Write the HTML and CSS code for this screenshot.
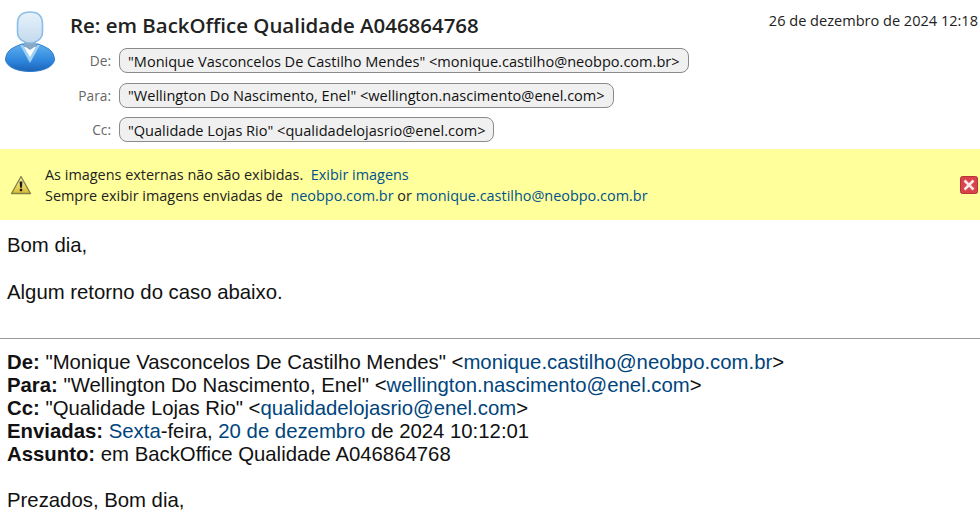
FILE: index.html
```html
<!DOCTYPE html>
<html lang="pt">
<head>
<meta charset="utf-8">
<title>Re: em BackOffice Qualidade A046864768</title>
<link rel="stylesheet" href="styles.css">
</head>
<body>
<header class="head">
  <svg class="avatar" width="50" height="61" viewBox="0 0 50 61" aria-hidden="true">
    <defs>
      <linearGradient id="face" x1="0" y1="0" x2="0" y2="1"><stop offset="0" stop-color="#e6f2fc"/><stop offset="1" stop-color="#c3d9ec"/></linearGradient>
      <linearGradient id="suit" x1="0" y1="0" x2="0" y2="1"><stop offset="0" stop-color="#5fb0ee"/><stop offset="0.6" stop-color="#2f86dc"/><stop offset="1" stop-color="#1a63b8"/></linearGradient>
    </defs>
    <path d="M0.5 49C1 41 5 38 12 35L17 33L33 33L38 35C45 38 49 41 49.5 49C48 56 38 60.5 25 60.5C12 60.5 2 56 0.5 49Z" fill="url(#suit)" stroke="#2e7cc9"/>
    <path d="M18 36H32L25 48Z" fill="#fff"/>
    <path d="M15 34L25 52L35 34L32 34L25 46L18 34Z" fill="#9fd0f4"/>
    <path d="M19 28H31V35L25 39L19 35Z" fill="#8aa8c4"/>
    <path d="M12.5 13C12.5 4 18 1 25 1C32 1 37.5 4 37.5 13L37.5 21C37.5 28 31 32 25 32C19 32 12.5 28 12.5 21Z" fill="url(#face)" stroke="#8cbde6" stroke-width="1.6"/>
  </svg>
  <div class="meta">
    <div class="top">
      <h1 class="subject">Re: em BackOffice Qualidade A046864768</h1>
      <time class="date">26 de dezembro de 2024 12:18</time>
    </div>
    <div class="row"><span class="label">De:</span><span class="pill">"Monique Vasconcelos De Castilho Mendes" &lt;monique.castilho@neobpo.com.br&gt;</span></div>
    <div class="row"><span class="label">Para:</span><span class="pill">"Wellington Do Nascimento, Enel" &lt;wellington.nascimento@enel.com&gt;</span></div>
    <div class="row"><span class="label">Cc:</span><span class="pill">"Qualidade Lojas Rio" &lt;qualidadelojasrio@enel.com&gt;</span></div>
  </div>
</header>
<section class="banner">
  <svg class="warn" width="22" height="20" viewBox="0 0 22 20" aria-hidden="true">
    <defs><linearGradient id="tri" x1="0" y1="0" x2="0" y2="1"><stop offset="0" stop-color="#fdf6a8"/><stop offset="1" stop-color="#d9bc2e"/></linearGradient></defs>
    <path d="M11 1.5L20.5 18.5L1.5 18.5Z" fill="url(#tri)" stroke="#84804a" stroke-width="1.3" stroke-linejoin="round"/>
    <path d="M9.6 6.5H12.4L11.9 12.8H10.1Z" fill="#1c1c1c"/>
    <rect x="9.8" y="13.8" width="2.4" height="2.4" fill="#1c1c1c"/>
  </svg>
  <div class="notice">
    <p class="line">As imagens externas não são exibidas.&nbsp; <a class="link" href="#">Exibir imagens</a></p>
    <p class="line">Sempre exibir imagens enviadas de&nbsp; <a class="link" href="#">neobpo.com.br</a> or <a class="link" href="#">monique.castilho@neobpo.com.br</a></p>
  </div>
  <svg class="close" width="18" height="18" viewBox="0 0 18 18" aria-hidden="true">
    <rect x="0.5" y="0.5" width="17" height="17" rx="2" fill="#d9434a" stroke="#b5333a"/>
    <path d="M4.5 4.5L13.5 13.5M13.5 4.5L4.5 13.5" stroke="#fbe8e8" stroke-width="2.6"/>
  </svg>
</section>
<main class="mail">
  <p class="para">Bom dia,</p>
  <p class="para">Algum retorno do caso abaixo.</p>
  <hr class="rule">
  <p class="quote">
    <b>De:</b> "Monique Vasconcelos De Castilho Mendes" &lt;<a class="mlink" href="#">monique.castilho@neobpo.com.br</a>&gt;<br>
    <b>Para:</b> "Wellington Do Nascimento, Enel" &lt;<a class="mlink" href="#">wellington.nascimento@enel.com</a>&gt;<br>
    <b>Cc:</b> "Qualidade Lojas Rio" &lt;<a class="mlink" href="#">qualidadelojasrio@enel.com</a>&gt;<br>
    <b>Enviadas:</b> <a class="mlink" href="#">Sexta</a>-feira, <a class="mlink" href="#">20 de dezembro</a> de 2024 10:12:01<br>
    <b>Assunto:</b> em BackOffice Qualidade A046864768
  </p>
  <p class="para">Prezados, Bom dia,</p>
</main>
</body>
</html>
```
FILE: styles.css
```css
html, body { margin: 0; padding: 0; height: 530px; overflow: hidden; background: #fff; }
body { font-family: "Open Sans", "Noto Sans", sans-serif; color: #222; }
.head { display: flex; height: 149px; box-sizing: border-box; padding: 11px 0 0 5px; }
.avatar { flex: none; margin-right: 15px; }
.meta { flex: 1; min-width: 0; }
.top { display: flex; justify-content: space-between; align-items: flex-start; height: 37.8px; }
.subject { margin: 1px 0 0; font-size: 20.45px; line-height: 26px; font-weight: 600; color: #222; }
.date { font-size: 14.55px; line-height: 20px; margin-top: -1px; margin-right: 2px; color: #222; }
.row { display: flex; align-items: center; height: 24px; margin-bottom: 10.5px; }
.label { width: 41px; text-align: right; margin-right: 8px; font-size: 13.7px; color: #666; }
.pill { box-sizing: border-box; height: 25px; padding: 0 8px; display: flex; align-items: center; border: 1px solid #8a8a8a; border-radius: 8px; background: #f0f0f0; font-size: 14.55px; color: #111; white-space: nowrap; }
.banner { display: flex; align-items: center; height: 71px; background: #ffff9c; padding: 0 2px 0 10px; box-sizing: border-box; }
.warn { flex: none; margin-right: 13px; }
.notice { flex: 1; padding-top: 2px; }
.line { margin: 0; font-size: 14.43px; line-height: 20.5px; color: #222; }
.link { color: #00528c; text-decoration: none; }
.close { flex: none; }
.mail { padding: 14px 7px 0; font-family: "Liberation Sans", Arial, sans-serif; font-size: 20.34px; line-height: 23px; color: #111; }
.para { margin: 0 0 24px; }
.rule { border: 0; border-top: 1px solid #999; margin: 34px -7px 12px; }
.quote { margin: 0 0 23px; }
.mlink { color: #00447c; text-decoration: none; }
```
